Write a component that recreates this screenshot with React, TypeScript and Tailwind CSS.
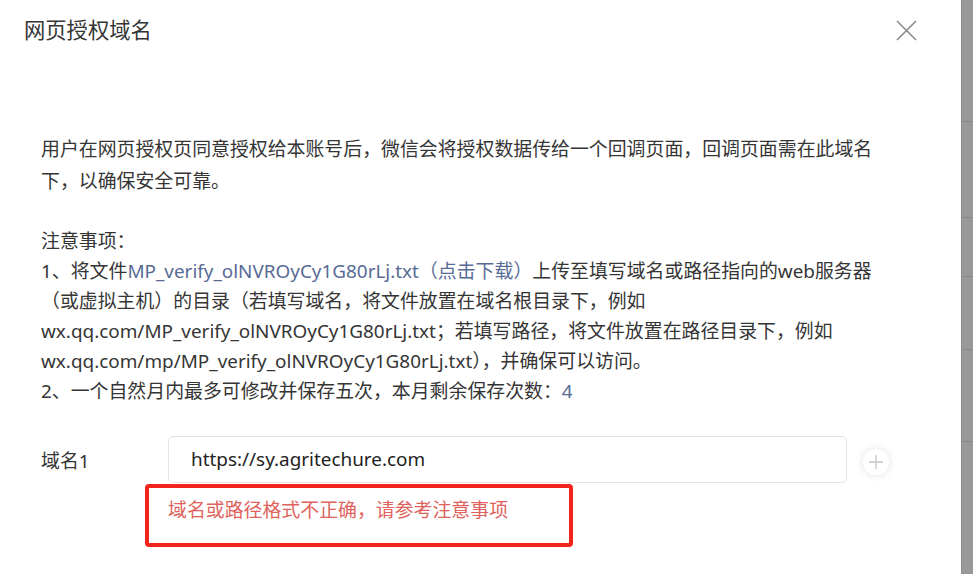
export default function App() {
  const font = { fontFamily: '"Noto Sans", "Noto Sans CJK SC", sans-serif' }
  const fileName = 'MP_verify_olNVROyCy1G80rLj.txt'

  return (
    <div className="flex h-[574px] w-[973px] overflow-hidden bg-white" style={font}>
      <div className="flex-1 bg-white">
        <div className="flex h-[60px] items-center justify-between pl-[24px] pr-[44px]">
          <h1 className="text-[21.3px] font-normal text-[#353535]">网页授权域名</h1>
          <svg width="21" height="21" viewBox="0 0 21 21" className="text-[#8a8a8a]">
            <path d="M1 1 L20 20 M20 1 L1 20" stroke="currentColor" strokeWidth="1.6" fill="none" />
          </svg>
        </div>

        <div className="mt-[73px] pl-[41px] pr-[80px] text-[18.9px] text-[#353535]">
          <p className="leading-[32px]">
            用户在网页授权页同意授权给本账号后，微信会将授权数据传给一个回调页面，回调页面需在此域名下，以确保安全可靠。
          </p>
          <div className="mt-[29px] leading-[30px]">
            <p>注意事项：</p>
            <p>
              1、将文件<a className="text-[#576b95]">{fileName}（点击下载）</a>上传至填写域名或路径指向的web服务器（或虚拟主机）的目录（若填写域名，将文件放置在域名根目录下，例如wx.qq.com/{fileName}；若填写路径，将文件放置在路径目录下，例如wx.qq.com/mp/{fileName}），并确保可以访问。
            </p>
            <p>
              2、一个自然月内最多可修改并保存五次，本月剩余保存次数：<span className="text-[#576b95]">4</span>
            </p>
          </div>
        </div>

        <div className="mt-[30px] flex pl-[41px]">
          <div className="flex h-[46px] w-[127px] items-center pt-[5px] text-[18.9px] text-[#353535]">域名1</div>
          <div>
            <div className="flex items-center">
              <div className="flex h-[47px] w-[679px] items-center rounded-[5px] border border-[#e2e2e2] px-[22px] text-[18.9px] text-[#222]">
                https://sy.agritechure.com
              </div>
              <div className="ml-[16px] mt-[4px] flex h-[26px] w-[26px] items-center justify-center rounded-full bg-white shadow-[0_0_8px_rgba(0,0,0,0.12)]">
                <svg width="16" height="16" viewBox="0 0 16 16" className="text-[#c4c4c4]">
                  <path d="M8 1 V15 M1 8 H15" stroke="currentColor" strokeWidth="1.3" fill="none" />
                </svg>
              </div>
            </div>
            <div className="relative mt-[12px]">
              <p className="text-[18.9px] leading-[30px] text-[#e0625c]">域名或路径格式不正确，请参考注意事项</p>
              <span className="absolute -left-[23px] -top-[11px] h-[63px] w-[428px] rounded-[4px] border-[4px] border-[#f2241c]" />
            </div>
          </div>
        </div>
      </div>

      <div className="flex w-[12px] flex-col bg-[#999] border-l border-[#8c8c8c]">
        <div className="h-[122px] border-b border-[#888]" />
        <div className="h-[96px] border-b border-[#888]" />
        <div className="h-[59px] border-b border-[#888]" />
        <div className="h-[73px] border-b border-[#888]" />
        <div className="h-[92px] border-b border-[#888]" />
      </div>
    </div>
  )
}
